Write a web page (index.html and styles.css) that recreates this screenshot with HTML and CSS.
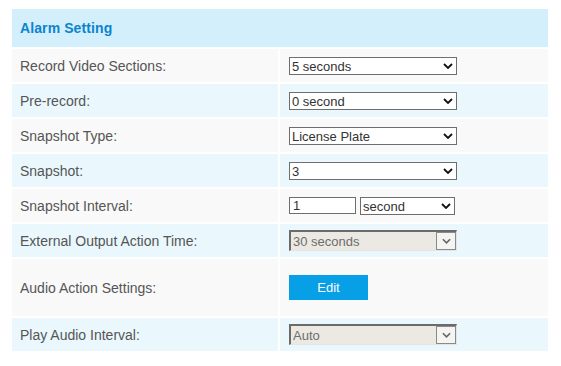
FILE: index.html
```html
<!DOCTYPE html>
<html lang="en">
<head>
  <meta charset="UTF-8" />
  <title>Alarm Setting</title>
  <link rel="stylesheet" href="styles.css">
</head>
<body>
  <div class="panel">
    <div class="panel-head">Alarm Setting</div>

    <div class="row">
      <div class="label">Record Video Sections:</div>
      <div class="field">
        <span class="pick w168">
          <select><option>5 seconds</option></select>
          <svg class="chev" viewBox="0 0 10 6"><path d="M1 1l4 4 4-4" /></svg>
        </span>
      </div>
    </div>

    <div class="row alt">
      <div class="label">Pre-record:</div>
      <div class="field">
        <span class="pick w168">
          <select><option>0 second</option></select>
          <svg class="chev" viewBox="0 0 10 6"><path d="M1 1l4 4 4-4" /></svg>
        </span>
      </div>
    </div>

    <div class="row">
      <div class="label">Snapshot Type:</div>
      <div class="field">
        <span class="pick w168">
          <select><option>License Plate</option></select>
          <svg class="chev" viewBox="0 0 10 6"><path d="M1 1l4 4 4-4" /></svg>
        </span>
      </div>
    </div>

    <div class="row alt">
      <div class="label">Snapshot:</div>
      <div class="field">
        <span class="pick w168">
          <select><option>3</option></select>
          <svg class="chev" viewBox="0 0 10 6"><path d="M1 1l4 4 4-4" /></svg>
        </span>
      </div>
    </div>

    <div class="row">
      <div class="label">Snapshot Interval:</div>
      <div class="field">
        <input class="num" type="text" value="1">
        <span class="pick w95">
          <select><option>second</option></select>
          <svg class="chev" viewBox="0 0 10 6"><path d="M1 1l4 4 4-4" /></svg>
        </span>
      </div>
    </div>

    <div class="row alt">
      <div class="label">External Output Action Time:</div>
      <div class="field">
        <span class="pick off w168">
          <select disabled><option>30 seconds</option></select>
          <span class="drop"><svg viewBox="0 0 10 6"><path d="M1 1l4 4 4-4" /></svg></span>
        </span>
      </div>
    </div>

    <div class="row tall">
      <div class="label">Audio Action Settings:</div>
      <div class="field">
        <button class="edit-btn">Edit</button>
      </div>
    </div>

    <div class="row alt">
      <div class="label">Play Audio Interval:</div>
      <div class="field">
        <span class="pick off w168">
          <select disabled><option>Auto</option></select>
          <span class="drop"><svg viewBox="0 0 10 6"><path d="M1 1l4 4 4-4" /></svg></span>
        </span>
      </div>
    </div>
  </div>
</body>
</html>
```

FILE: styles.css
```css
body {
  margin: 0;
  background: #fff;
  font-family: 'Liberation Sans', Arial, sans-serif;
  color: #555;
}
.panel {
  width: 536px;
  margin: 9px 0 0 12px;
}
.panel-head {
  height: 38px;
  display: flex;
  align-items: center;
  padding-left: 8px;
  background: #d4effc;
  color: #0a84cf;
  font-size: 14px;
  font-weight: bold;
  letter-spacing: 0.1px;
}
.row {
  display: grid;
  grid-template-columns: 266px 268px;
  column-gap: 2px;
  height: 33px;
  margin-top: 2px;
}
.row.tall {
  height: 57px;
}
.row > div {
  display: flex;
  align-items: center;
  background: #f9f9f9;
}
.row.alt > div {
  background: #eaf8fe;
}
.label {
  padding-left: 8px;
  font-size: 14px;
}
.field {
  padding-left: 9px;
  gap: 4px;
}
.pick {
  position: relative;
  display: inline-block;
  height: 18px;
}
.w168 { width: 168px; }
.w95 { width: 95px; }
.pick select {
  appearance: none;
  -webkit-appearance: none;
  width: 100%;
  height: 100%;
  margin: 0;
  padding: 0 0 0 2px;
  border: 1px solid #6e6e6e;
  border-radius: 0;
  background: #fff;
  color: #333;
  font-family: 'Liberation Sans', Arial, sans-serif;
  font-size: 13px;
}
.chev {
  position: absolute;
  right: 4px;
  top: 6px;
  width: 10px;
  height: 6px;
  fill: none;
  stroke: #111;
  stroke-width: 1.8;
  pointer-events: none;
}
.num {
  width: 67px;
  height: 17px;
  box-sizing: border-box;
  margin: 0;
  padding: 0 0 0 3px;
  border: 1px solid #6e6e6e;
  font-family: 'Liberation Sans', Arial, sans-serif;
  font-size: 13px;
  color: #333;
}
.pick.off {
  height: 21px;
}
.pick.off select {
  border-style: solid;
  border-width: 2px 1px 1px 2px;
  border-color: #6b6b6b #e4e4e4 #e4e4e4 #6b6b6b;
  background: #ebe9e2;
  color: #6d6d6d;
  opacity: 1;
}
.drop {
  position: absolute;
  right: 1px;
  top: 2px;
  width: 18px;
  height: 16px;
  border: 1px solid #8a8a8a;
  background: #f4f4f2;
  display: flex;
  align-items: center;
  justify-content: center;
}
.drop svg {
  width: 9px;
  height: 6px;
  fill: none;
  stroke: #666;
  stroke-width: 1.8;
}
.edit-btn {
  width: 79px;
  height: 25px;
  border: none;
  background: #07a0e7;
  color: #fff;
  font-family: 'Liberation Sans', Arial, sans-serif;
  font-size: 13px;
  cursor: pointer;
}
```
